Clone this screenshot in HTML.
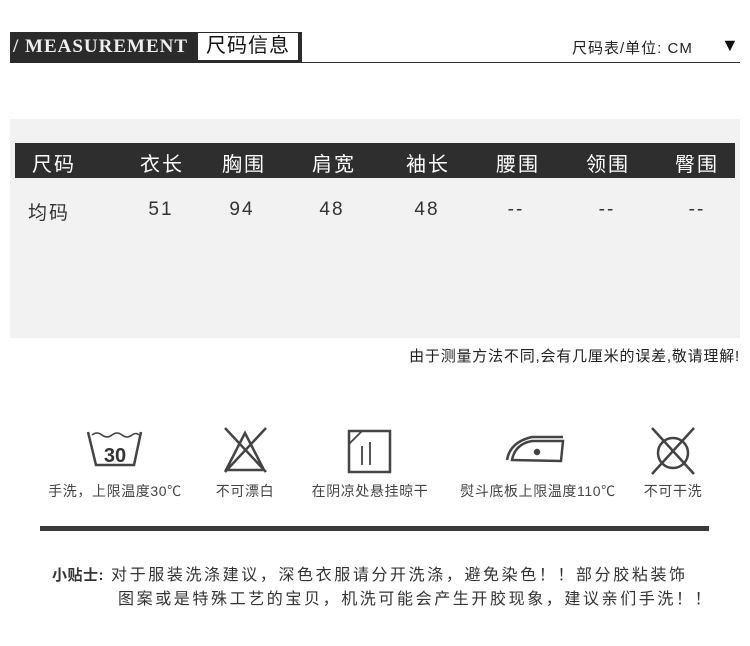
<!DOCTYPE html><html><head><meta charset="utf-8"><style>
body{margin:0;width:750px;height:646px;background:#fff;position:relative;font-family:"Liberation Sans","Noto Sans CJK SC",sans-serif;color:#333;overflow:hidden}
.a{position:absolute}
.c{position:absolute;transform:translateX(-50%);white-space:nowrap}
</style></head><body>
<div class="a" style="left:10px;top:32px;width:292px;height:31px;background:#2b2b2b"></div>
<div class="a" style="left:13px;top:36px;font-family:'Liberation Serif',serif;font-weight:bold;font-size:19px;color:#eee;letter-spacing:1px">/ MEASUREMENT</div>
<div class="a" style="left:198px;top:33px;width:100px;height:27px;background:#fff;font-size:20px;color:#111;line-height:27px;text-align:center;letter-spacing:1px">尺码信息</div>
<div class="a" style="left:300px;top:62px;width:440px;height:1px;background:#333"></div>
<div class="a" style="left:572px;top:37px;font-size:15px;color:#222;letter-spacing:1px">尺码表/单位: CM</div>
<div class="a" style="left:721px;top:35px;font-size:18px;color:#111">▼</div>
<div class="a" style="left:10px;top:119px;width:730px;height:219px;background:#f2f2f2"></div>
<div class="a" style="left:15px;top:143px;width:720px;height:35px;background:#2e2e2e"></div>
<div style="font-size:20px;color:#fff;letter-spacing:2px">
<div class="c" style="left:54px;top:148px">尺码</div><div class="c" style="left:162px;top:148px">衣长</div><div class="c" style="left:244px;top:148px">胸围</div><div class="c" style="left:334px;top:148px">肩宽</div><div class="c" style="left:428px;top:148px">袖长</div><div class="c" style="left:518px;top:148px">腰围</div><div class="c" style="left:608px;top:148px">领围</div><div class="c" style="left:697px;top:148px">臀围</div></div>
<div style="font-size:19px;color:#333;letter-spacing:2px">
<div class="c" style="left:49px;top:198px">均码</div><div class="c" style="left:161px;top:199px">51</div><div class="c" style="left:242px;top:199px">94</div><div class="c" style="left:332px;top:199px">48</div><div class="c" style="left:427px;top:199px">48</div><div class="c" style="left:516px;top:199px">--</div><div class="c" style="left:607px;top:199px">--</div><div class="c" style="left:697px;top:199px">--</div></div>
<div class="a" style="right:10px;top:345px;font-size:15px;color:#222;letter-spacing:0.8px">由于测量方法不同,会有几厘米的误差,敬请理解!</div>
<svg class="a" style="left:0;top:420px" width="750" height="60" fill="none" stroke="#444" stroke-width="2.5">
<path d="M88 12 L96 45 L134 45 L141 12"/><path d="M92 15 q5 -4 10 0 q5 4 10 0 q5 -4 10 0 q5 4 10 0 q4 -3 7 0" stroke-width="1.5"/>
<text x="115" y="42" font-size="20" font-weight="bold" fill="#333" stroke="none" text-anchor="middle" font-family="Liberation Sans">30</text>
<path d="M245 13 L226 50 L264 50 Z M225 8 L266 52 M266 8 L225 52"/>
<rect x="349" y="11" width="41" height="41"/><path d="M349 24 L362 11 M362 26 V45 M370 22 V45" stroke-width="1.8"/>
<path d="M512 40 Q515 24 532 21 L563 21 L561 41 Z M507 40 Q510 22 532 17 L563 17"/><circle cx="537" cy="32" r="2" fill="#444"/>
<circle cx="673" cy="33" r="15"/><path d="M652 8 L694 54 M694 8 L652 54"/>
</svg>
<div style="font-size:14px;color:#444;letter-spacing:0.6px">
<div class="c" style="left:115px;top:481px">手洗，上限温度30℃</div><div class="c" style="left:245px;top:481px">不可漂白</div><div class="c" style="left:370px;top:481px">在阴凉处悬挂晾干</div><div class="c" style="left:538px;top:481px">熨斗底板上限温度110℃</div><div class="c" style="left:673px;top:481px">不可干洗</div></div>
<div class="a" style="left:40px;top:526px;width:669px;height:5px;background:#3a3a3a"></div>
<div class="a" style="left:52px;top:564px;font-size:16px;color:#333;line-height:24px;letter-spacing:2.6px;white-space:nowrap"><b style="letter-spacing:0.5px;font-size:15px">小贴士:</b> 对于服装洗涤建议，深色衣服请分开洗涤，避免染色！！部分胶粘装饰<br><span style="padding-left:66px">图案或是特殊工艺的宝贝，机洗可能会产生开胶现象，建议亲们手洗！！</span></div>
</body></html>
